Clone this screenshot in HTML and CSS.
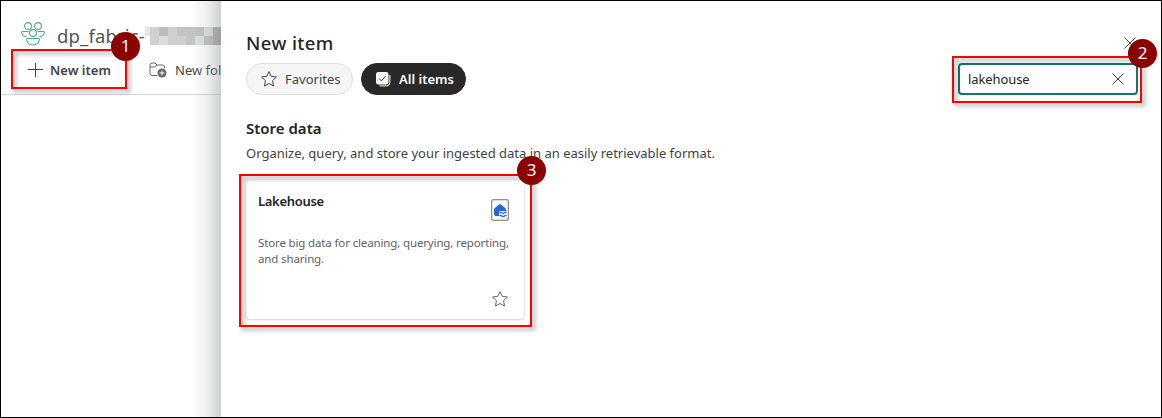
FILE: index.html
```html
<!DOCTYPE html>
<html lang="en">
<head>
<meta charset="utf-8">
<title>New item</title>
<link rel="stylesheet" href="styles.css">
</head>
<body>
<div class="window">
  <section class="workspace">
    <header class="workspace-head">
      <svg class="people" viewBox="0 0 24 24" width="24" height="24" fill="none" stroke="#4aa58c" stroke-width="1.1">
        <circle cx="7" cy="4" r="3.400"/><circle cx="17" cy="4" r="3.400"/><circle cx="12" cy="11" r="3.400"/>
        <path d="M7.500 9.500H1.500q-1 0-.9 1c.4 2.600 2 4 4.900 4M16.500 9.500h6q1 0 .9 1c-.4 2.600-2 4-4.900 4M6.500 16.500h11q1 0 .9 1c-.5 3.500-2.900 5.500-6.400 5.500s-5.900-2-6.400-5.500q-.1-1 .9-1z"/>
      </svg>
      <h1 class="workspace-name">dp_fabric-</h1>
      <div class="mosaic"><i class="e"></i><i class="d"></i><i class="g"></i><i class="d"></i><i class="b"></i><i class="b"></i><i class="k"></i><i class="c"></i><i class="h"></i><i></i><i class="d"></i><i class="c"></i><i class="d"></i><i class="d"></i><i class="b"></i><i class="c"></i><i class="k"></i><i class="h"></i></div>
    </header>
    <nav class="toolbar">
      <button class="tool tool-new">
        <svg width="16" height="16" viewBox="0 0 16 16" fill="none" stroke="#444"><path d="M8.500 1v14M1 7.500h15"/></svg>
        <span>New item</span>
      </button>
      <button class="tool tool-folder">
        <svg width="18" height="16" viewBox="0 0 18 16" fill="none" stroke="#666"><path d="M8 13.500H3A2 2 0 0 1 1 11.500V3a2 2 0 0 1 2-2h3l2 2h5.500a2 2 0 0 1 2 2v1M1 5h5l2-2"/><circle cx="13" cy="11" r="4.500" fill="#666" stroke="none"/><path stroke="#fff" d="M13 8.500v5M10.500 11h5"/></svg>
        <span>New folder</span>
      </button>
    </nav>
    <div class="mark mark-one"></div><b class="badge badge-one">1</b>
    <div class="edge-shade"></div>
  </section>
  <main class="panel">
    <header class="panel-head">
      <h2 class="panel-title">New item</h2>
      <svg class="close" width="12" height="12" viewBox="0 0 12 12" stroke="#444"><path d="M.5.5l11 11M11.500.5l-11 11"/></svg>
    </header>
    <div class="filters">
      <button class="pill">
        <svg width="16" height="16" viewBox="0 0 16 16" fill="none" stroke="#444" stroke-linejoin="round"><path d="M8 .6l2.200 4.700 5.200.7-3.800 3.600.9 5.400L8 12.500l-4.500 2.500.9-5.400L.6 6l5.200-.7z"/></svg>
        <span>Favorites</span>
      </button>
      <button class="pill pill-on">
        <svg width="15" height="15" viewBox="0 0 15 15" fill="none"><rect width="12.500" height="12.500" rx="2.500" fill="#fff"/><path d="M3 6.500l2.300 2.300 4.300-4.600" stroke="#292929"/><path d="M13.900 3v7.500a3.400 3.400 0 0 1-3.400 3.400H3.500" stroke="#fff"/></svg>
        <span>All items</span>
      </button>
      <div class="search">
        <span>lakehouse</span>
        <svg width="12" height="12" viewBox="0 0 12 12" stroke="#444"><path d="M.5.5l11 11M11.500.5l-11 11"/></svg>
        <div class="mark mark-two"></div><b class="badge badge-two">2</b>
      </div>
    </div>
    <h3 class="group-title">Store data</h3>
    <p class="group-text">Organize, query, and store your ingested data in an easily retrievable format.</p>
    <article class="card">
      <div class="card-head">
        <h4 class="card-title">Lakehouse</h4>
        <svg class="lake" width="18" height="22" viewBox="0 0 18 22">
          <rect x=".6" y=".6" width="16.800" height="20.800" rx="2" fill="#f7f7f7" stroke="#8e8e8e" stroke-width="1.200"/>
          <path d="M3 10.500q0-.8.600-1.300L8 5.500q1-.8 2 0l4.400 3.700q.6.500.6 1.300V17H5a2 2 0 0 1-2-2z" fill="#2468d2"/>
          <path d="M8 12h8v6.500H8z" fill="#f7f7f7"/>
          <path d="M8.500 13.800q1.200-1.400 2.400 0t2.400 0 2.200 0M8.500 17q1.200-1.400 2.400 0t2.400 0 2.200 0" fill="none" stroke="#2d76d8" stroke-width="1.300"/>
        </svg>
      </div>
      <p class="card-text">Store big data for cleaning, querying, reporting,<br>and sharing.</p>
      <svg class="star" width="16" height="16" viewBox="0 0 16 16" fill="none" stroke="#666" stroke-linejoin="round"><path d="M8 .6l2.200 4.700 5.200.7-3.800 3.600.9 5.400L8 12.500l-4.500 2.500.9-5.400L.6 6l5.200-.7z"/></svg>
      <div class="mark mark-three"></div><b class="badge badge-three">3</b>
    </article>
  </main>
</div>
</body>
</html>
```
FILE: styles.css
```css
* { box-sizing: border-box; }
body { margin: 0; font-family: "Noto Sans", "Open Sans", sans-serif; color: #242424; }
h1, h2, h3, h4, p { margin: 0; font-weight: 400; white-space: nowrap; }
button { border: 0; background: none; padding: 0; font: inherit; color: inherit; }
svg { display: block; flex: none; }
.window { display: flex; width: 1162px; height: 418px; border: 1px solid #000; background: #fff; }

.workspace { position: relative; width: 220px; flex: none; overflow: hidden; white-space: nowrap; }
.workspace-head { display: flex; height: 48px; padding: 21px 0 0 20px; }
.workspace-name { width: 89px; margin-left: 12px; font-size: 18.500px; line-height: 27px; letter-spacing: .15px; color: #555; }
.mosaic { display: grid; flex: none; grid-template-columns: 5px repeat(8, 9px); grid-auto-rows: 9px; height: 18px; margin-top: 5px; }
.b { background: #c3c3c3; } .c { background: #dcdcdc; } .d { background: #d0d0d0; }
.e { background: #e6e6e6; } .g { background: #bcbcbc; } .h { background: #b0b0b0; } .k { background: #b8bfbb; }
.toolbar { display: flex; gap: 23px; height: 46px; padding: 4px 0 0 12px; border-bottom: 1px solid #d5d5d5; }
.tool { display: flex; flex: none; align-items: center; gap: 7px; height: 33px; font-size: 13px; color: #444; }
.tool-new { width: 113px; padding-left: 14px; font-weight: 600; }
.tool-folder { gap: 8px; }
.edge-shade { position: absolute; top: 0; right: 0; bottom: 0; width: 26px; background: linear-gradient(90deg, rgba(190,225,210,.12), rgba(170,185,178,.2) 45%, rgba(130,130,130,.38)); }

.panel { flex: 1; padding: 28px 23px 0 25px; background: #fff; }
.panel-head { display: flex; justify-content: space-between; height: 34px; }
.panel-title { font-size: 18.500px; font-weight: 500; line-height: 28px; letter-spacing: .4px; }
.close { margin: 8px 2px 0 0; }
.filters { display: flex; height: 32px; gap: 8px; }
.pill { display: flex; align-items: center; gap: 8px; width: 107px; padding-left: 14px; border: 1px solid #e0e0e0; border-radius: 16px; background: #f5f5f5; font-size: 13px; color: #424242; }
.pill-on { width: 105px; border-color: #292929; background: #292929; color: #fff; font-weight: 600; }
.search { position: relative; display: flex; align-items: center; justify-content: space-between; width: 180px; margin-left: auto; padding: 0 12px 0 8px; border: 2px solid #117865; border-radius: 4px; font-size: 13px; letter-spacing: -.1px; }
.group-title { margin-top: 22px; font-size: 15px; font-weight: 600; line-height: 22px; }
.group-text { margin-top: 4px; font-size: 13px; line-height: 20px; color: #424242; }
.card { position: relative; width: 278px; height: 139px; margin-top: 17px; padding: 12px 16px 0 12px; border-radius: 4px; box-shadow: 0 0 2px rgba(0,0,0,.16), 0 1px 2px rgba(0,0,0,.14); }
.card-head { display: flex; justify-content: space-between; height: 43px; }
.card-title { font-size: 13px; font-weight: 600; line-height: 18px; letter-spacing: -.3px; }
.lake { margin: 7px -1px 0 0; }
.card-text { font-size: 11.500px; line-height: 16px; letter-spacing: -.14px; color: #616161; }
.star { margin: 24px 0 0 auto; }

.mark { position: absolute; border: 2px solid #f00; filter: drop-shadow(3px 3px 2px rgba(0,0,0,.4)); }
.mark-one { left: 10px; top: 48px; width: 116px; height: 40px; }
.mark-two { left: -8px; top: -9px; width: 190px; height: 47px; }
.mark-three { left: -7px; top: -6px; width: 293px; height: 153px; }
.badge { position: absolute; z-index: 1; width: 29px; height: 29px; border-radius: 50%; background: #8b0000; color: #fff; font-size: 17px; font-weight: 400; line-height: 28px; letter-spacing: 0; text-align: center; }
.badge-one { left: 110px; top: 31px; }
.badge-two { left: 168px; top: -26px; }
.badge-three { left: 271px; top: -24px; }
```
